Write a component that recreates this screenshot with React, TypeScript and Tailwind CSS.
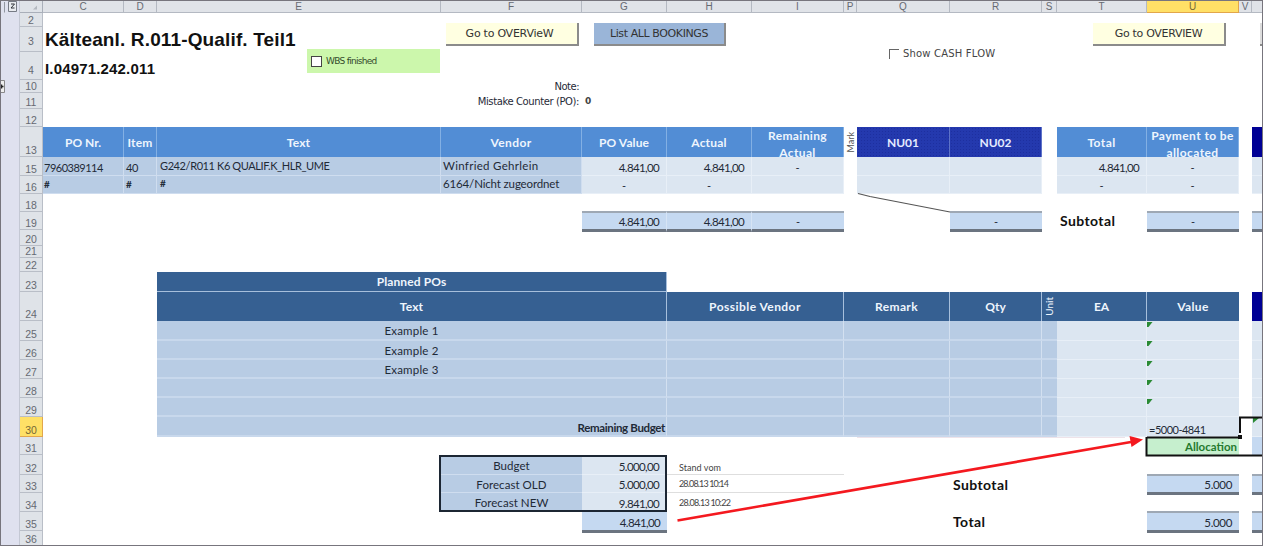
import React from "react";

type CellProps = { at: string; className?: string; text?: string; textClass?: string };

function Cell({ at, className = "", text, textClass = "" }: CellProps) {
  return (
    <div className={`flex min-h-0 min-w-0 overflow-hidden whitespace-nowrap ${at} ${className}`}>
      {text !== undefined && <span className={`block ${textClass}`}>{text}</span>}
    </div>
  );
}

const columnHeads: [string, string][] = [
  ["col-start-3", "C"], ["col-start-4", "D"], ["col-start-5", "E"], ["col-start-6", "F"],
  ["col-start-7", "G"], ["col-start-8", "H"], ["col-start-9", "I"], ["col-start-10", "P"],
  ["col-start-11", "Q"], ["col-start-12", "R"], ["col-start-13", "S"], ["col-start-14", "T"],
  ["col-start-15", "U"], ["col-start-16", "V"], ["col-start-17", ""],
];

const rowHeads: [string, string, string?][] = [
  ["row-start-2", "2"], ["row-start-3", "3", "pb-[4px]"], ["row-start-4", "4", "pb-[3px]"], ["row-start-5", "10"],
  ["row-start-6", "11"], ["row-start-7", "12"], ["row-start-8", "13"], ["row-start-9", "15"],
  ["row-start-10", "16"], ["row-start-11", "18"], ["row-start-12", "19"], ["row-start-13", "20"],
  ["row-start-14", "21"], ["row-start-15", "22"], ["row-start-16", "23"], ["row-start-17", "24"],
  ["row-start-18", "25"], ["row-start-19", "26"], ["row-start-20", "27"], ["row-start-21", "28"],
  ["row-start-22", "29"], ["row-start-23", "30"], ["row-start-24", "31"], ["row-start-25", "32"],
  ["row-start-26", "33"], ["row-start-27", "34"], ["row-start-28", "35"], ["row-start-29", "36"],
];

const head = "items-center justify-center text-center font-bold text-[12px] leading-[17px] text-[#eef5fd] border-r border-[#83b0e4] bg-[#528dd5]";
const headTwoLines = "items-start justify-center whitespace-pre-line text-center font-bold text-[12px] leading-[17px] text-[#eef5fd] border-r border-[#83b0e4] bg-[#528dd5]";
const navy = "items-center justify-center font-bold text-[12px] text-[#eef5fd] border-r border-[#a7bfdc] bg-[#366092]";
const hatch = "items-center justify-center font-bold text-[12px] text-[#e4ebff] border-r border-[#5e73c8] bg-[#2439ae] bg-[radial-gradient(#1d2f9f_0.8px,transparent_0.9px)] bg-[size:3px_3px]";
const mid = "bg-[#b8cce4] border-r border-b border-[#cfddef]";
const midWide = "bg-[#b8cce4] border-r border-b-2 border-r-[#d3e0f0] border-b-[#c8d8ec]";
const light = "bg-[#dce6f1] border-r border-b border-[#e8eff7]";
const num = "items-end justify-end pr-[7px] text-[11.5px] leading-[14px] tracking-[-0.65px]";
const dash = "items-end justify-center leading-[14px]";
const total = "-mt-px -mb-[2px] border-t-2 border-b-[3px] border-t-[#9ea8b4] border-b-[#6b7480] bg-[#c5d9f1]";

const plannedRows: [string, string][] = [
  ["row-start-18", "Example 1"], ["row-start-19", "Example 2"], ["row-start-20", "Example 3"],
  ["row-start-21", ""], ["row-start-22", ""], ["row-start-23", ""],
];

const budgetRows: [string, string, string][] = [
  ["row-start-25", "Budget", "5.000,00"],
  ["row-start-26", "Forecast OLD", "5.000,00"],
  ["row-start-27", "Forecast NEW", "9.841,00"],
];

function Headings() {
  return (
    <>
      <Cell at="col-start-1 row-start-1 row-span-29" className="border-r border-[#c4c8d4] bg-[#dfe1ef]" />
      <Cell at="col-start-2 row-start-1" className="border-r border-b border-[#a9afb9] bg-[#dfe3e8]" />
      {columnHeads.map(([at, name]) => (
        <Cell
          key={at}
          at={`${at} row-start-1`}
          className={`items-center justify-center border-r border-b font-['Liberation_Sans'] text-[10px] leading-[10px] ${
            name === "U" ? "border-[#e2a64b] bg-[#ffe066] text-[#756835]" : "border-[#b4b9c2] bg-[#e0e3e8] text-[#666a72]"
          }`}
          text={name}
          textClass="pt-[1px]"
        />
      ))}
      {rowHeads.map(([at, name, lift = ""]) => (
        <Cell
          key={at}
          at={`col-start-2 ${at}`}
          className={`items-end justify-center border-r border-b font-['Liberation_Sans'] text-[10.5px] leading-[11px] ${lift} ${
            name === "30" ? "border-[#e2a64b] bg-[#ffe066] text-[#756835]" : "border-[#b9bec7] bg-[#dfe3e8] text-[#666a72]"
          }`}
          text={name}
        />
      ))}
    </>
  );
}

function TopArea() {
  return (
    <>
      <Cell at="col-start-3 col-span-3 row-start-3" className="items-center pl-[2px] font-['Liberation_Sans'] text-[19px] font-bold leading-[24px] text-[#111]" text="Kälteanl. R.011-Qualif. Teil1" textClass="tracking-[0.14px]" />
      <Cell at="col-start-3 col-span-2 row-start-4" className="items-center pl-[2px] pt-[4px] font-['Liberation_Sans'] text-[15px] font-bold text-[#111]" text="I.04971.242.011" textClass="tracking-[0.17px]" />
      <Cell at="col-start-6 row-start-5" className="items-center justify-end pr-[3px] font-['DejaVu_Sans'] text-[10px] leading-[12px]" text="Note:" textClass="tracking-[-0.5px]" />
      <Cell at="col-start-6 row-start-6" className="items-center justify-end pr-[3px] pt-px font-['DejaVu_Sans'] text-[10px]" text="Mistake Counter (PO):" textClass="tracking-[-0.4px]" />
      <Cell at="col-start-7 row-start-6" className="items-center pl-[3px] pt-px font-['DejaVu_Sans'] text-[9px] font-bold text-[#444]" text="0" />
    </>
  );
}

function OrdersTable() {
  return (
    <>
      <Cell at="col-start-3 row-start-8" className={head} text="PO Nr." />
      <Cell at="col-start-4 row-start-8" className={head} text="Item" textClass="tracking-[0.2px]" />
      <Cell at="col-start-5 row-start-8" className={head} text="Text" textClass="tracking-[0.2px]" />
      <Cell at="col-start-6 row-start-8" className={head} text="Vendor" textClass="tracking-[0.4px]" />
      <Cell at="col-start-7 row-start-8" className={head} text="PO Value" textClass="tracking-[0.1px]" />
      <Cell at="col-start-8 row-start-8" className={head} text="Actual" textClass="tracking-[0.2px]" />
      <Cell at="col-start-9 row-start-8" className={headTwoLines} text={"Remaining\nActual"} textClass="tracking-[0.35px]" />
      <Cell at="col-start-10 row-start-8" className="items-center justify-center text-[9px] leading-[10px] text-[#555]" text="Mark" textClass="rotate-180 [writing-mode:vertical-rl]" />
      <Cell at="col-start-11 row-start-8" className={hatch} text="NU01" />
      <Cell at="col-start-12 row-start-8" className={hatch} text="NU02" />
      <Cell at="col-start-14 row-start-8" className={head} text="Total" textClass="tracking-[0.4px]" />
      <Cell at="col-start-15 row-start-8" className={headTwoLines} text={"Payment to be\nallocated"} textClass="tracking-[0.4px]" />
      <Cell at="col-start-17 row-start-8" className="bg-[#000095]" />

      <Cell at="col-start-3 row-start-9" className={`${mid} items-end pl-[1px] text-[11px] leading-[14px]`} text="7960389114" textClass="tracking-[-0.5px]" />
      <Cell at="col-start-4 row-start-9" className={`${mid} items-end pl-[2px] text-[11px] leading-[14px]`} text="40" textClass="tracking-[-0.5px]" />
      <Cell at="col-start-5 row-start-9" className={`${mid} items-start pl-[3px] pt-[1px] text-[11px] leading-[15px]`} text="G242/R011 K6 QUALIF.K_HLR_UME" textClass="tracking-[-0.4px]" />
      <Cell at="col-start-6 row-start-9" className={`${mid} items-start pl-[2px] pt-[1px] text-[11.5px] leading-[15px]`} text="Winfried Gehrlein" textClass="tracking-[0.3px]" />
      <Cell at="col-start-7 row-start-9" className={`${light} ${num}`} text="4.841,00" />
      <Cell at="col-start-8 row-start-9" className={`${light} ${num}`} text="4.841,00" />
      <Cell at="col-start-9 row-start-9" className={`${light} ${dash}`} text="-" />
      <Cell at="col-start-11 row-start-9" className={light} />
      <Cell at="col-start-12 row-start-9" className={light} />
      <Cell at="col-start-14 row-start-9" className={`${light} ${num}`} text="4.841,00" />
      <Cell at="col-start-15 row-start-9" className={`${light} ${dash}`} text="-" />
      <Cell at="col-start-17 row-start-9" className={light} />

      <Cell at="col-start-3 row-start-10" className={`${mid} items-center pl-[1px] text-[10px] font-bold`} text="#" />
      <Cell at="col-start-4 row-start-10" className={`${mid} items-center pl-[2px] text-[10px] font-bold`} text="#" />
      <Cell at="col-start-5 row-start-10" className={`${mid} items-start pl-[3px] text-[10px] font-bold`} text="#" />
      <Cell at="col-start-6 row-start-10" className={`${mid} items-start pl-[2px] text-[11.5px] leading-[16px]`} text="6164/Nicht zugeordnet" textClass="tracking-[-0.15px]" />
      <Cell at="col-start-7 row-start-10" className={`${light} ${dash}`} text="-" />
      <Cell at="col-start-8 row-start-10" className={`${light} ${dash}`} text="-" />
      <Cell at="col-start-9 row-start-10" className={light} />
      <Cell at="col-start-11 row-start-10" className={light} />
      <Cell at="col-start-12 row-start-10" className={light} />
      <Cell at="col-start-14 row-start-10" className={`${light} ${dash}`} text="-" />
      <Cell at="col-start-15 row-start-10" className={`${light} ${dash}`} text="-" />
      <Cell at="col-start-17 row-start-10" className={light} />

      <Cell at="col-start-7 row-start-12" className={`${total} ${num} border-r border-r-[#d6e4f5]`} text="4.841,00" />
      <Cell at="col-start-8 row-start-12" className={`${total} ${num} border-r border-r-[#d6e4f5]`} text="4.841,00" />
      <Cell at="col-start-9 row-start-12" className={`${total} ${dash}`} text="-" />
      <Cell at="col-start-12 row-start-12" className={`${total} ${dash}`} text="-" />
      <Cell at="col-start-14 row-start-12" className="items-center pl-[3px] text-[14px] font-bold leading-[18px] text-[#111]" text="Subtotal" textClass="tracking-[0.4px]" />
      <Cell at="col-start-15 row-start-12" className={`${total} ${dash}`} text="-" />
      <Cell at="col-start-17 row-start-12" className={total} />
    </>
  );
}

function PlannedTable() {
  return (
    <>
      <Cell at="col-start-5 col-span-3 row-start-16" className={`${navy} border-b`} text="Planned POs" textClass="tracking-[0.1px]" />
      <Cell at="col-start-5 col-span-3 row-start-17" className={navy} text="Text" textClass="tracking-[0.2px]" />
      <Cell at="col-start-8 col-span-2 row-start-17" className={navy} text="Possible Vendor" textClass="tracking-[0.45px]" />
      <Cell at="col-start-10 col-span-2 row-start-17" className={navy} text="Remark" textClass="tracking-[0.35px]" />
      <Cell at="col-start-12 row-start-17" className={navy} text="Qty" />
      <Cell at="col-start-13 row-start-17" className="items-center justify-center bg-[#366092] text-[10px] leading-[11px] text-[#eef5fd]" text="Unit" textClass="rotate-180 [writing-mode:vertical-rl]" />
      <Cell at="col-start-14 row-start-17" className={navy} text="EA" />
      <Cell at="col-start-15 row-start-17" className={`${navy} border-r-0`} text="Value" textClass="tracking-[0.4px]" />
      <Cell at="col-start-17 row-start-17" className="bg-[#000095]" />
      {plannedRows.map(([row, text]) => (
        <React.Fragment key={row}>
          <Cell at={`col-start-5 col-span-3 ${row}`} className={`${midWide} items-center justify-center text-[11.5px]`} text={text} textClass="pt-px tracking-[0.2px]" />
          <Cell at={`col-start-8 col-span-2 ${row}`} className={midWide} />
          <Cell at={`col-start-10 col-span-2 ${row}`} className={midWide} />
          <Cell at={`col-start-12 ${row}`} className={midWide} />
          <Cell at={`col-start-13 ${row}`} className={`${midWide} border-r-0`} />
          <Cell at={`col-start-14 ${row}`} className={light} />
          <Cell at={`col-start-15 ${row}`} className={`${light} border-r-0`} />
          <Cell at={`col-start-17 ${row}`} className={light} />
        </React.Fragment>
      ))}
      <Cell at="col-start-5 col-span-3 row-start-23" className="items-center justify-end pr-[2px] text-[11.5px] font-bold" text="Remaining Budget" textClass="tracking-[-0.35px]" />
      <Cell at="col-start-15 row-start-23" className="items-end pl-[2px] text-[11px] leading-[15px]" text="=5000-4841" textClass="tracking-[-0.5px]" />
      <Cell at="col-start-15 row-start-24" className="items-center justify-end bg-[#c6efce] pr-[2px] text-[11.5px] font-bold text-[#257a2e]" text="Allocation" />
      <Cell at="col-start-17 row-start-24" className="bg-[#c5d9f1]" />
    </>
  );
}

function BudgetBlock() {
  return (
    <>
      {budgetRows.map(([row, name, value]) => (
        <React.Fragment key={row}>
          <Cell at={`col-start-6 ${row}`} className={`${mid} items-center justify-center border-r-0 text-[11.5px]`} text={name} textClass="pt-px tracking-[0.05px]" />
          <Cell at={`col-start-7 ${row}`} className={`${light} ${num}`} text={value} />
        </React.Fragment>
      ))}
      <Cell at="col-start-6 col-span-2 row-start-25 row-span-3" className="-ml-[2px] border-2 border-[#1c2633]" />
      <Cell at="col-start-7 row-start-28" className={`${num} -mb-[2px] border-b-[3px] border-b-[#6b7480] bg-[#c5d9f1]`} text="4.841,00" />
      <Cell at="col-start-8 col-span-2 row-start-25" className="items-end border-b border-[#dedede] pl-[12px] text-[9px] leading-[12px] text-[#444]" text="Stand vom" textClass="tracking-[0.05px]" />
      <Cell at="col-start-8 col-span-2 row-start-26" className="items-center border-b border-[#dedede] pl-[12px] text-[9px] text-[#444]" text="28.08.13 10:14" textClass="tracking-[-0.85px]" />
      <Cell at="col-start-8 col-span-2 row-start-27" className="items-center pl-[12px] text-[9px] text-[#444]" text="28.08.13 10:22" textClass="tracking-[-0.7px]" />
      <Cell at="col-start-12 row-start-26" className="items-center pl-[3px] text-[14px] font-bold text-[#111]" text="Subtotal" textClass="tracking-[0.4px]" />
      <Cell at="col-start-12 row-start-28" className="items-center pl-[3px] text-[14px] font-bold text-[#111]" text="Total" textClass="tracking-[0.4px]" />
      <Cell at="col-start-15 row-start-26" className={`${total} ${num}`} text="5.000" textClass="tracking-[-0.35px]" />
      <Cell at="col-start-15 row-start-28" className={`${total} ${num}`} text="5.000" textClass="tracking-[-0.35px]" />
      <Cell at="col-start-17 row-start-26" className={total} />
      <Cell at="col-start-17 row-start-28" className={total} />
    </>
  );
}

function Controls() {
  const button = "absolute top-[23px] flex h-[23px] items-center justify-center border-r-2 border-b-2 border-[#8b8b8b] font-['DejaVu_Sans'] text-[11px] text-[#333]";
  return (
    <>
      <div className={`${button} left-[446px] w-[133px] bg-[#ffffe1] pr-[4px]`}><span className="tracking-[-0.25px]">Go to OVERVieW</span></div>
      <div className={`${button} left-[594px] w-[132px] bg-[#9ab5d8]`}><span className="tracking-[-0.4px]">List ALL BOOKINGS</span></div>
      <div className={`${button} left-[1093px] w-[133px] bg-[#ffffe1]`}><span className="tracking-[-0.3px]">Go to OVERVIEW</span></div>
      <div className="absolute left-[1260px] top-[23px] h-[23px] w-[2px] border-b-2 border-[#8b8b8b] bg-[#ddd]" />
      <div className="absolute left-[307px] top-[49px] flex h-[24px] w-[133px] items-center gap-[4px] bg-[#ccf7ac] pl-[4px] font-['DejaVu_Sans'] text-[9px] text-[#334a2b]">
        <i className="h-[11px] w-[11px] border border-[#444] bg-white" />
        <span className="tracking-[-0.7px]">WBS finished</span>
      </div>
      <div className="absolute left-[889px] top-[46px] flex h-[15px] items-center gap-[4px] font-['DejaVu_Sans'] text-[10px] text-[#444]">
        <i className="h-[10px] w-[10px] border-l border-t border-[#666]" />
        <span className="whitespace-nowrap tracking-[0.18px]">Show CASH FLOW</span>
      </div>
    </>
  );
}

function Drawings() {
  return (
    <svg className="pointer-events-none absolute left-0 top-0" width="1263" height="546" viewBox="0 0 1263 546" fill="none">
      <path d="M858 193.500L870 196.500L950 212" stroke="#555" strokeWidth="1.100" />
      {[322, 341, 361, 380, 399].map((y) => (
        <path key={y} d={`M1147 ${y}h5.500l-4 5h-1.500z`} fill="#2a8a34" />
      ))}
      <path d="M1253 418h6l-6 5z" fill="#2a8a34" />
      <path d="M1147 437.500H1238M1240 433V417.500H1263M1146.500 437V455.500H1263" stroke="#111" strokeWidth="2" />
      <path d="M1238 435h4v4h-4z" fill="#111" />
      <path d="M857 437.500H1125" stroke="#eee3e9" />
      <path d="M677.500 520.500L1131 442" stroke="#f4191f" strokeWidth="2.600" />
      <path d="M1143 439.500L1129.500 436L1131.500 447z" fill="#f4191f" />
      <path d="M33 9.500L37 5.500V9.500z" fill="#b3b8bf" />
      <path d="M4.500 2V12.500" stroke="#9297a1" />
      <path d="M8.500 1.500H16.500V11.500H8.500z" fill="#e9ebf0" stroke="#767a85" />
      <path d="M11 4h3.500l-3.500 4h3.500" stroke="#30333a" />
      <path d="M1 80.500H4.500V92.500H1" fill="#eee" stroke="#888" />
      <path d="M1 86.500H3.500M1.500 84.500V88.500" stroke="#222" strokeWidth="1.500" />
    </svg>
  );
}

export default function App() {
  return (
    <main className="relative h-[546px] w-[1263px] overflow-hidden bg-white font-[Lato,'Noto_Sans',sans-serif] text-[11px] leading-[15px] text-[#1f2a37]">
      <div className="grid grid-cols-[20px_23px_81px_33px_284px_141px_85px_85px_92px_13px_93px_92px_15px_90px_92px_13px_11px] grid-rows-[13px_14px_25px_28px_13px_16px_18px_30px_19px_18px_18px_18px_16px_12px_14px_20px_29px_20px_19px_19px_19px_19px_20px_18px_20px_18px_19px_19px_15px]">
        <Headings />
        <TopArea />
        <OrdersTable />
        <PlannedTable />
        <BudgetBlock />
      </div>
      <Controls />
      <Drawings />
      <div className="pointer-events-none absolute inset-0 border border-[#77757d]" />
    </main>
  );
}
